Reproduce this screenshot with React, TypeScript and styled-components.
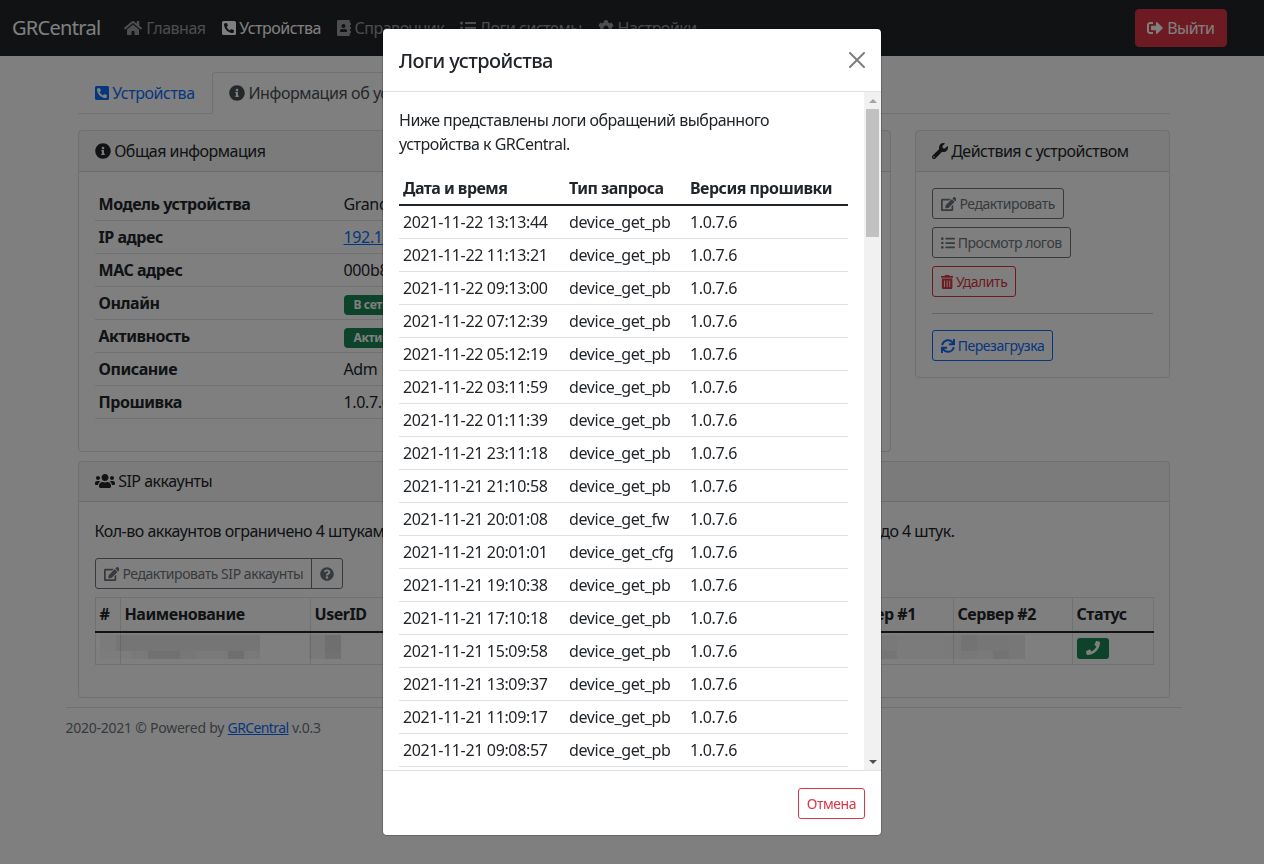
import styled, { createGlobalStyle } from "styled-components";
import {
  FaAddressBook,
  FaCog,
  FaEdit,
  FaHome,
  FaInfoCircle,
  FaListUl,
  FaPhone,
  FaPhoneSquareAlt,
  FaQuestionCircle,
  FaSignOutAlt,
  FaSync,
  FaTrashAlt,
  FaUsers,
  FaWrench,
} from "react-icons/fa";

const GlobalStyle = createGlobalStyle`
  html, body {
    margin: 0;
    height: 100%;
    overflow: hidden;
  }
  body {
    background: #fff;
    color: #212529;
    font-family: "Noto Sans", "Open Sans", sans-serif;
    font-size: 16px;
    line-height: 24px;
    letter-spacing: -0.5px;
  }
  * {
    box-sizing: border-box;
  }
  a {
    color: #0d6efd;
  }
  svg {
    height: 1em;
    vertical-align: -0.125em;
  }
`;

// react-icons gives every icon a square box, these keep the wider proportions
const HomeIcon = styled(FaHome)`
  width: 1.125em;
`;
const PhoneSquareIcon = styled(FaPhoneSquareAlt)`
  width: 0.875em;
`;
const AddressIcon = styled(FaAddressBook)`
  width: 0.875em;
`;
const EditIcon = styled(FaEdit)`
  width: 1.125em;
`;
const TrashIcon = styled(FaTrashAlt)`
  width: 0.875em;
`;
const UsersIcon = styled(FaUsers)`
  width: 1.25em;
`;

const Navbar = styled.nav`
  display: flex;
  align-items: center;
  justify-content: space-between;
  height: 56px;
  padding: 0 37px 0 12px;
  background: #212529;
`;

const NavLeft = styled.div`
  display: flex;
  align-items: center;
`;

const Brand = styled.span`
  margin-right: 16px;
  font-size: 20px;
  letter-spacing: -0.7px;
  color: #fff;
`;

const NavLink = styled.a<{ $active?: boolean }>`
  padding: 8px;
  white-space: nowrap;
  color: ${(p) => (p.$active ? "#fff" : "rgba(255, 255, 255, 0.55)")};
`;

const Btn = styled.button<{ $color: string }>`
  display: inline-block;
  font: inherit;
  letter-spacing: -0.45px;
  font-size: 14px;
  line-height: 21px;
  padding: 4px 8px;
  height: 31px;
  background: transparent;
  color: ${(p) => p.$color};
  border: 1px solid ${(p) => p.$color};
  border-radius: 3px;
  white-space: nowrap;
`;

const ExitButton = styled.button`
  font: inherit;
  letter-spacing: inherit;
  height: 38px;
  width: 92px;
  padding: 0;
  background: #dc3545;
  color: #fff;
  border: 1px solid #dc3545;
  border-radius: 4px;
`;

const Shell = styled.div`
  padding-right: 17px;
`;

const Container = styled.div`
  width: 1140px;
  margin: 0 auto;
  padding: 16px 12px 0;
`;

const Content = styled.main`
  padding: 0 12px;
`;

const Tabs = styled.div`
  display: flex;
  height: 42px;
  margin-bottom: 16px;
  border-bottom: 1px solid #dee2e6;
`;

const Tab = styled.a<{ $active?: boolean }>`
  height: 42px;
  padding: 8px 16px;
  white-space: nowrap;
  letter-spacing: -0.42px;
  color: ${(p) => (p.$active ? "#495057" : "#0d6efd")};
  background: ${(p) => (p.$active ? "#fff" : "transparent")};
  border: 1px solid transparent;
  border-color: ${(p) => (p.$active ? "#dee2e6 #dee2e6 #fff" : "transparent")};
  border-radius: 4px 4px 0 0;
`;

const TopRow = styled.div`
  display: grid;
  grid-template-columns: 813px 255px;
  justify-content: space-between;
  align-items: start;
  margin-bottom: 9px;
`;

const Card = styled.section`
  border: 1px solid rgba(0, 0, 0, 0.125);
  border-radius: 4px;
`;

const CardHeader = styled.header<{ $tight?: boolean }>`
  height: ${(p) => (p.$tight ? "40px" : "41px")};
  padding: ${(p) => (p.$tight ? "7px 16px" : "8px 16px")};
  background: rgba(0, 0, 0, 0.03);
  border-bottom: 1px solid rgba(0, 0, 0, 0.125);
  white-space: nowrap;
`;

const CardBody = styled.div`
  padding: 16px;
`;

const InfoTable = styled.table`
  width: 100%;
  margin-bottom: 16px;
  border-collapse: separate;
  border-spacing: 0;
  table-layout: fixed;
  th,
  td {
    height: 33px;
    padding: 4px;
    text-align: left;
    border-bottom: 1px solid #dee2e6;
    white-space: nowrap;
  }
  th {
    width: 245px;
    letter-spacing: -0.45px;
  }
  td {
    letter-spacing: -0.35px;
  }
`;

const Badge = styled.span`
  display: inline-block;
  padding: 0 10px;
  line-height: 20px;
  font-size: 12px;
  font-weight: 700;
  color: #fff;
  background: #198754;
  border-radius: 4px;
`;

const ActionList = styled.div`
  display: flex;
  flex-direction: column;
  align-items: flex-start;
  gap: 8px;
`;

const Divider = styled.hr`
  width: 100%;
  height: 1px;
  margin: 8px 0;
  border: 0;
  background: #212529;
  opacity: 0.25;
`;

const Note = styled.p`
  margin: 1px 0 15px;
  white-space: nowrap;
`;

const BtnGroup = styled.div`
  display: flex;
  margin-bottom: 8px;
  ${Btn}:first-child {
    border-radius: 3px 0 0 3px;
  }
  ${Btn}:last-child {
    margin-left: -1px;
    border-radius: 0 3px 3px 0;
  }
`;

const SipWrap = styled.div`
  position: relative;
  width: 1058px;
  margin-bottom: 16px;
`;

const SipTable = styled.table`
  width: 100%;
  border-collapse: collapse;
  table-layout: fixed;
  th,
  td {
    padding: 4px;
    border: 1px solid #dee2e6;
    text-align: left;
    white-space: nowrap;
    overflow: hidden;
  }
  th {
    height: 34px;
    letter-spacing: -0.45px;
    border-bottom: 2px solid #212529;
  }
  td {
    height: 33px;
    padding: 0;
  }
`;

const Col = styled.col<{ $w: number }>`
  width: ${(p) => p.$w}px;
`;

const Mosaic = styled.svg<{ $left: number; $cols: number }>`
  position: absolute;
  top: 38px;
  left: ${(p) => p.$left}px;
  width: ${(p) => p.$cols * 16}px;
  height: 24px;
`;

const StatusButton = styled.button`
  display: block;
  width: 32px;
  height: 21px;
  margin: 0 0 0 4px;
  padding: 0;
  font-size: 14px;
  line-height: 19px;
  color: #fff;
  background: #198754;
  border: 0;
  border-radius: 3px;
`;

const Footer = styled.footer`
  margin-top: 9px;
  padding-top: 8px;
  border-top: 1px solid #dee2e6;
  font-size: 14px;
  letter-spacing: -0.25px;
  color: #6c757d;
`;

const FooterLink = styled.a`
  letter-spacing: -0.6px;
`;

const Backdrop = styled.div`
  position: fixed;
  inset: 0;
  background: rgba(0, 0, 0, 0.5);
`;

const Modal = styled.div`
  position: fixed;
  top: 28px;
  left: 382px;
  width: 500px;
  height: 808px;
  display: flex;
  flex-direction: column;
  background: #fff;
  border: 1px solid rgba(0, 0, 0, 0.2);
  border-radius: 4.8px;
  background-clip: padding-box;
`;

const ModalHeader = styled.div`
  flex: none;
  display: flex;
  align-items: center;
  justify-content: space-between;
  height: 63px;
  padding: 2px 16px 0;
  border-bottom: 1px solid #dee2e6;
`;

const ModalTitle = styled.h5`
  margin: 0;
  font-size: 20px;
  font-weight: 500;
  line-height: 30px;
  letter-spacing: -0.55px;
`;

const CloseIcon = styled.svg`
  height: 16px;
  width: 16px;
  margin-bottom: 2px;
  opacity: 0.5;
`;

const ModalMiddle = styled.div`
  flex: 1;
  min-height: 0;
  display: flex;
`;

const LogPane = styled.div`
  flex: 1;
  min-width: 0;
  padding: 16px;
  overflow: hidden;
`;

const ScrollRail = styled.div`
  flex: none;
  width: 17px;
  display: flex;
  flex-direction: column;
  background: #f1f1f1;
`;

const ScrollArrow = styled.div<{ $down?: boolean }>`
  flex: none;
  height: 17px;
  margin-top: ${(p) => (p.$down ? "auto" : "0")};
  display: flex;
  align-items: center;
  justify-content: center;
  &::before {
    content: "";
    border-left: 4px solid transparent;
    border-right: 4px solid transparent;
    border-top: ${(p) => (p.$down ? "4px solid #505050" : "0")};
    border-bottom: ${(p) => (p.$down ? "0" : "4px solid #a3a3a3")};
  }
`;

const ScrollThumb = styled.div`
  flex: none;
  height: 128px;
  margin: 0 2px;
  background: #c1c1c1;
`;

const Intro = styled.p`
  margin: 0 0 16px;
  width: 400px;
`;

const LogTable = styled.table`
  width: 449px;
  border-collapse: collapse;
  table-layout: fixed;
  th,
  td {
    padding: 4px;
    text-align: left;
    white-space: nowrap;
    border-bottom: 1px solid #dee2e6;
  }
  th {
    height: 33px;
    letter-spacing: -0.52px;
    border-bottom: 2px solid #212529;
  }
  td {
    height: 33px;
    letter-spacing: -0.35px;
  }
`;

const ModalFooter = styled.div`
  flex: none;
  display: flex;
  align-items: center;
  justify-content: flex-end;
  height: 65px;
  padding: 0 16px;
  border-top: 1px solid #dee2e6;
`;

const navItems = [
  { icon: <HomeIcon />, label: "Главная" },
  { icon: <PhoneSquareIcon />, label: "Устройства", active: true },
  { icon: <AddressIcon />, label: "Справочник" },
  { icon: <FaListUl />, label: "Логи системы" },
  { icon: <FaCog />, label: "Настройки" },
];

const infoRows: [string, React.ReactNode][] = [
  ["Модель устройства", "Grandstream GXP1620"],
  ["IP адрес", <a href="#ip">192.168.1.100</a>],
  ["MAC адрес", "000b82000000"],
  ["Онлайн", <Badge>В сети</Badge>],
  ["Активность", <Badge>Активен</Badge>],
  ["Описание", "Adm"],
  ["Прошивка", "1.0.7.6"],
];

const logs: [string, string][] = [
  ["2021-11-22 13:13:44", "device_get_pb"],
  ["2021-11-22 11:13:21", "device_get_pb"],
  ["2021-11-22 09:13:00", "device_get_pb"],
  ["2021-11-22 07:12:39", "device_get_pb"],
  ["2021-11-22 05:12:19", "device_get_pb"],
  ["2021-11-22 03:11:59", "device_get_pb"],
  ["2021-11-22 01:11:39", "device_get_pb"],
  ["2021-11-21 23:11:18", "device_get_pb"],
  ["2021-11-21 21:10:58", "device_get_pb"],
  ["2021-11-21 20:01:08", "device_get_fw"],
  ["2021-11-21 20:01:01", "device_get_cfg"],
  ["2021-11-21 19:10:38", "device_get_pb"],
  ["2021-11-21 17:10:18", "device_get_pb"],
  ["2021-11-21 15:09:58", "device_get_pb"],
  ["2021-11-21 13:09:37", "device_get_pb"],
  ["2021-11-21 11:09:17", "device_get_pb"],
  ["2021-11-21 09:08:57", "device_get_pb"],
];

// blurred-out values in the SIP row: how much darker than the cell each 16px block is
const blurred = [
  {
    left: 5,
    rows: [
      [4, 10, 10, 10, 10, 10, 10, 10, 10, 10],
      [3, 3, 6, 14, 14, 8, 6, 6, 16, 6],
    ],
  },
  {
    left: 214,
    rows: [
      [6, 16],
      [6, 14],
    ],
  },
  {
    left: 786,
    rows: [
      [6, 4, 4, 4, 5, 12, 9, 9, 8],
      [10, 4, 4, 4, 5, 7, 6, 12, 8],
    ],
  },
];

function Blur({ left, rows }: { left: number; rows: number[][] }) {
  const cols = rows[0].length;
  return (
    <Mosaic $left={left} $cols={cols} viewBox={`0 0 ${cols * 16} 24`}>
      {rows.map((row, y) =>
        row.map((dark, x) => (
          <rect
            key={`${x}-${y}`}
            x={x * 16}
            y={y * 16}
            width={16}
            height={y === 0 ? 16 : 8}
            fill="#000"
            opacity={dark / 128}
          />
        ))
      )}
    </Mosaic>
  );
}

export default function App() {
  return (
    <>
      <GlobalStyle />
      <Navbar>
        <NavLeft>
          <Brand>GRCentral</Brand>
          {navItems.map((item) => (
            <NavLink key={item.label} $active={item.active}>
              {item.icon} {item.label}
            </NavLink>
          ))}
        </NavLeft>
        <ExitButton>
          <FaSignOutAlt /> Выйти
        </ExitButton>
      </Navbar>

      <Shell>
        <Container>
          <Content>
            <Tabs>
              <Tab>
                <PhoneSquareIcon /> Устройства
              </Tab>
              <Tab $active>
                <FaInfoCircle /> Информация об устройстве
              </Tab>
            </Tabs>

            <TopRow>
              <Card>
                <CardHeader>
                  <FaInfoCircle /> Общая информация
                </CardHeader>
                <CardBody>
                  <InfoTable>
                    <tbody>
                      {infoRows.map(([name, value]) => (
                        <tr key={name}>
                          <th>{name}</th>
                          <td>{value}</td>
                        </tr>
                      ))}
                    </tbody>
                  </InfoTable>
                </CardBody>
              </Card>

              <Card>
                <CardHeader>
                  <FaWrench /> Действия с устройством
                </CardHeader>
                <CardBody>
                  <ActionList>
                    <Btn $color="#6c757d">
                      <EditIcon /> Редактировать
                    </Btn>
                    <Btn $color="#6c757d">
                      <FaListUl /> Просмотр логов
                    </Btn>
                    <Btn $color="#dc3545">
                      <TrashIcon /> Удалить
                    </Btn>
                    <Divider />
                    <Btn $color="#0d6efd">
                      <FaSync /> Перезагрузка
                    </Btn>
                  </ActionList>
                </CardBody>
              </Card>
            </TopRow>

            <Card>
              <CardHeader $tight>
                <UsersIcon /> SIP аккаунты
              </CardHeader>
              <CardBody>
                <Note>
                  Кол-во аккаунтов ограничено 4 штуками. При необходимости вы можете добавить и удалить аккаунты, но до 4 штук.
                </Note>
                <BtnGroup>
                  <Btn $color="#6c757d">
                    <EditIcon /> Редактировать SIP аккаунты
                  </Btn>
                  <Btn $color="#6c757d">
                    <FaQuestionCircle />
                  </Btn>
                </BtnGroup>
                <SipWrap>
                  <SipTable>
                    <colgroup>
                      <Col $w={25} />
                      <Col $w={190} />
                      <Col $w={100} />
                      <Col $w={423} />
                      <Col $w={120} />
                      <Col $w={119} />
                      <Col $w={81} />
                    </colgroup>
                    <thead>
                      <tr>
                        <th>#</th>
                        <th>Наименование</th>
                        <th>UserID</th>
                        <th>Пароль</th>
                        <th>Сервер #1</th>
                        <th>Сервер #2</th>
                        <th>Статус</th>
                      </tr>
                    </thead>
                    <tbody>
                      <tr>
                        <td />
                        <td />
                        <td />
                        <td />
                        <td />
                        <td />
                        <td>
                          <StatusButton>
                            <FaPhone />
                          </StatusButton>
                        </td>
                      </tr>
                    </tbody>
                  </SipTable>
                  {blurred.map((b) => (
                    <Blur key={b.left} left={b.left} rows={b.rows} />
                  ))}
                </SipWrap>
              </CardBody>
            </Card>
          </Content>
          <Footer>
            2020-2021 © Powered by <FooterLink href="#gr">GRCentral</FooterLink> v.0.3
          </Footer>
        </Container>
      </Shell>

      <Backdrop />

      <Modal>
        <ModalHeader>
          <ModalTitle>Логи устройства</ModalTitle>
          <CloseIcon viewBox="0 0 16 16">
            <path d="M.293.293a1 1 0 011.414 0L8 6.586 14.293.293a1 1 0 111.414 1.414L9.414 8l6.293 6.293a1 1 0 01-1.414 1.414L8 9.414l-6.293 6.293a1 1 0 01-1.414-1.414L6.586 8 .293 1.707a1 1 0 010-1.414z" />
          </CloseIcon>
        </ModalHeader>
        <ModalMiddle>
          <LogPane>
            <Intro>Ниже представлены логи обращений выбранного устройства к GRCentral.</Intro>
            <LogTable>
              <colgroup>
                <Col $w={166} />
                <Col $w={121} />
                <Col $w={162} />
              </colgroup>
              <thead>
                <tr>
                  <th>Дата и время</th>
                  <th>Тип запроса</th>
                  <th>Версия прошивки</th>
                </tr>
              </thead>
              <tbody>
                {logs.map(([date, type]) => (
                  <tr key={date}>
                    <td>{date}</td>
                    <td>{type}</td>
                    <td>1.0.7.6</td>
                  </tr>
                ))}
              </tbody>
            </LogTable>
          </LogPane>
          <ScrollRail>
            <ScrollArrow />
            <ScrollThumb />
            <ScrollArrow $down />
          </ScrollRail>
        </ModalMiddle>
        <ModalFooter>
          <Btn $color="#dc3545">Отмена</Btn>
        </ModalFooter>
      </Modal>
    </>
  );
}
